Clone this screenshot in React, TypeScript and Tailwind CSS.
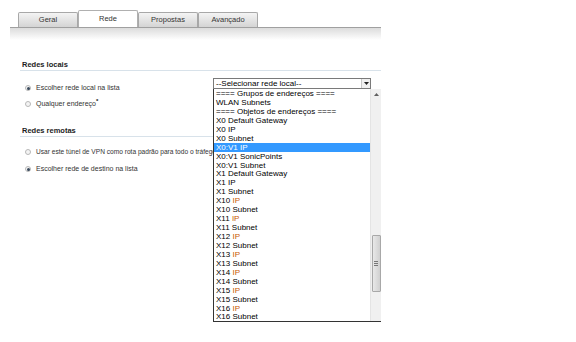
import React from "react";

const items: { label: string; orange?: boolean; selected?: boolean }[] = [
  { label: "==== Grupos de endereços ====" },
  { label: "WLAN Subnets" },
  { label: "==== Objetos de endereços ====" },
  { label: "X0 Default Gateway" },
  { label: "X0 IP" },
  { label: "X0 Subnet" },
  { label: "X0:V1 IP", selected: true },
  { label: "X0:V1 SonicPoints" },
  { label: "X0:V1 Subnet" },
  { label: "X1 Default Gateway" },
  { label: "X1 IP" },
  { label: "X1 Subnet" },
  { label: "X10 IP", orange: true },
  { label: "X10 Subnet" },
  { label: "X11 IP", orange: true },
  { label: "X11 Subnet" },
  { label: "X12 IP", orange: true },
  { label: "X12 Subnet" },
  { label: "X13 IP", orange: true },
  { label: "X13 Subnet" },
  { label: "X14 IP", orange: true },
  { label: "X14 Subnet" },
  { label: "X15 IP", orange: true },
  { label: "X15 Subnet" },
  { label: "X16 IP", orange: true },
  { label: "X16 Subnet" },
];

function Radio({ checked }: { checked?: boolean }) {
  return (
    <span className="w-[6px] h-[6px] rounded-full border border-[#b8b8b8] bg-[#f4f4f4] flex items-center justify-center shrink-0">
      {checked && <span className="w-[3px] h-[3px] rounded-full bg-[#3a4a5c]" />}
    </span>
  );
}

function Tab({ label, active }: { label: string; active?: boolean }) {
  return active ? (
    <div className="w-[60px] h-[17px] -mt-[2px] border border-b-0 border-[#b0b0b0] rounded-t-[2px] bg-white flex items-center justify-center text-[7.5px] text-[#333]">
      {label}
    </div>
  ) : (
    <div className="w-[60px] h-[15px] border border-b-0 border-[#a8a8a8] rounded-t-[2px] bg-gradient-to-b from-[#f4f4f4] to-[#d4d4d4] flex items-center justify-center text-[7.5px] text-[#333]">
      {label}
    </div>
  );
}

export default function App() {
  return (
    <div className="w-[576px] h-[342px] bg-white relative overflow-hidden font-['Liberation_Sans',Arial,sans-serif] text-[#333]">
      <div className="flex pt-[12px] pl-[18px]">
        <Tab label="Geral" />
        <Tab label="Rede" active />
        <Tab label="Propostas" />
        <Tab label="Avançado" />
      </div>
      <div className="ml-[10px] w-[371px] h-[13px] border-t border-[#a0a0a0] bg-gradient-to-b from-[#dcdcdc] to-white" />

      <div className="pl-[20px] pt-[20px] w-[381px]">
        <div className="text-[7.5px] font-bold text-[#222] pl-[2px] leading-[9px]">Redes locais</div>
        <div className="mt-[1px] border-t border-[#d8e2ea]" />
        <div className="flex items-center gap-[5px] pl-[5px] mt-[13px] h-[8px] text-[7px]">
          <Radio checked />
          <span>Escolher rede local na lista</span>
        </div>
        <div className="flex items-center gap-[5px] pl-[5px] mt-[8px] h-[8px] text-[7px]">
          <Radio />
          <span>
            Qualquer endereço<sup className="text-[6px] font-bold text-[#111]">*</sup>
          </span>
        </div>

        <div className="text-[7.5px] font-bold text-[#222] pl-[2px] leading-[9px] mt-[18px]">Redes remotas</div>
        <div className="mt-[1px] border-t border-[#d8e2ea]" />
        <div className="flex items-center gap-[5px] pl-[5px] mt-[11px] h-[8px] text-[6.6px] whitespace-nowrap">
          <Radio />
          <span>Usar este túnel de VPN como rota padrão para todo o tráfego</span>
        </div>
        <div className="flex items-center gap-[5px] pl-[5px] mt-[9px] h-[8px] text-[7px]">
          <Radio checked />
          <span>Escolher rede de destino na lista</span>
        </div>
      </div>

      {/* open select dropdown overlay */}
      <div className="absolute left-[213px] top-[78px]">
        <div className="w-[158px] h-[11px] border border-[#7a7a7a] bg-white flex items-center">
          <span className="flex-1 text-[8px] leading-[9px] pl-[2px] text-black">--Selecionar rede local--</span>
          <span className="w-[9px] h-[9px] bg-[#f0f0f0] border-l border-[#c8c8c8] flex items-center justify-center">
            <svg width="5" height="3" viewBox="0 0 5 3">
              <path d="M0 0H5L2.5 3Z" fill="#222" />
            </svg>
          </span>
        </div>
        <div className="w-[168px] h-[233px] border-l border-b border-[#333] bg-white flex overflow-hidden">
          <div className="flex-1 flex flex-col overflow-hidden">
            {items.map((it) => {
              const [pre, ...rest] = it.label.split(" ");
              return (
                <div
                  key={it.label}
                  className={
                    "h-[8.95px] shrink-0 text-[8px] leading-[9px] pl-[2px] whitespace-nowrap " +
                    (it.selected ? "bg-[#3399ff] text-white" : "text-black")
                  }
                >
                  {it.orange ? (
                    <>
                      {pre} <span className="text-[#c85a00]">{rest.join(" ")}</span>
                    </>
                  ) : (
                    it.label
                  )}
                </div>
              );
            })}
          </div>
          <div className="w-[11px] bg-[#f0f0f0] border-l border-[#e4e4e4] flex flex-col items-center">
            <div className="h-[11px] w-full flex items-center justify-center">
              <svg width="5" height="3" viewBox="0 0 5 3">
                <path d="M0 3H5L2.5 0Z" fill="#606060" />
              </svg>
            </div>
            <div className="mt-[135px] w-[9px] h-[57px] border border-[#a8a8a8] rounded-[1px] bg-gradient-to-r from-[#e8e8e8] to-[#d0d0d0] flex items-center justify-center">
              <div className="flex flex-col gap-[1px]">
                <span className="w-[4px] h-[1px] bg-[#777]" />
                <span className="w-[4px] h-[1px] bg-[#777]" />
                <span className="w-[4px] h-[1px] bg-[#777]" />
              </div>
            </div>
          </div>
        </div>
      </div>
    </div>
  );
}
